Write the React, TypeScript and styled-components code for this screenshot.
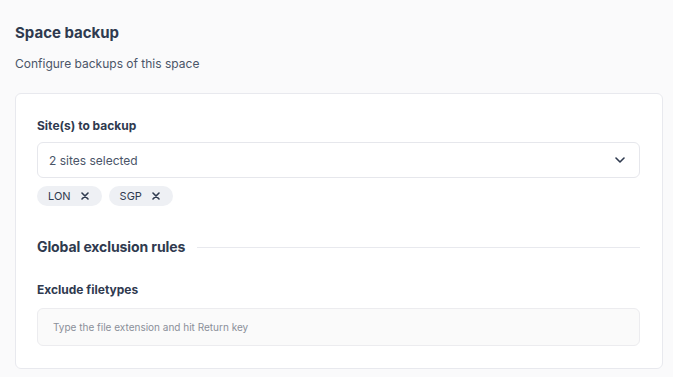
import { createGlobalStyle, styled } from "styled-components";

const GlobalStyle = createGlobalStyle`
  html, body {
    margin: 0;
    padding: 0;
    background: #fafafb;
    font-family: Inter, "Noto Sans", sans-serif;
    color: #2f3a4f;
  }
  * { box-sizing: border-box; }
`;

const Page = styled.div`
  padding: 22px 10px 0 15px;
`;

const Title = styled.h1`
  margin: 0;
  font-size: 15px;
  font-weight: 700;
  line-height: 22px;
  color: #2f3a4f;
`;

const Subtitle = styled.p`
  margin: 12px 0 0;
  font-size: 12px;
  line-height: 16px;
  color: #4a5568;
`;

const Card = styled.section`
  margin-top: 21px;
  background: #fff;
  border: 1px solid #e8e9ee;
  border-radius: 6px;
  padding: 24px 22px 22px 21px;
`;

const Label = styled.div<{ $mt?: number }>`
  font-size: 12px;
  font-weight: 700;
  line-height: 16px;
  color: #2f3a4f;
  margin-top: ${(p) => p.$mt ?? 0}px;
`;

const Select = styled.div`
  margin-top: 8px;
  height: 36px;
  border: 1px solid #e6e7ec;
  border-radius: 6px;
  display: flex;
  align-items: center;
  justify-content: space-between;
  padding: 0 14px 0 11px;
  font-size: 12px;
  color: #4a5568;
`;

const Chips = styled.div`
  display: flex;
  gap: 7px;
  margin-top: 8px;
`;

const Chip = styled.span`
  display: inline-flex;
  align-items: center;
  gap: 10px;
  height: 20px;
  padding: 0 13px 0 11px;
  border-radius: 10px;
  background: #eef0f4;
  font-size: 11px;
  color: #2f3a4f;
`;

const SectionHead = styled.div`
  display: flex;
  align-items: center;
  gap: 12px;
  margin-top: 32px;
`;

const SectionTitle = styled.h2`
  margin: 0;
  font-size: 14px;
  font-weight: 700;
  line-height: 18px;
  letter-spacing: -0.1px;
  color: #2f3a4f;
  white-space: nowrap;
`;

const Rule = styled.div`
  flex: 1;
  height: 1px;
  background: #e8e9ee;
`;

const Input = styled.input`
  display: block;
  width: 100%;
  margin-top: 10px;
  height: 38px;
  border: 1px solid #ececef;
  border-radius: 6px;
  background: #fafafa;
  padding: 0 15px;
  font-family: inherit;
  font-size: 10px;
  color: #2f3a4f;
  outline: none;

  &::placeholder {
    color: #8a8f99;
  }
`;

const Chevron = () => (
  <svg width="10" height="6" viewBox="0 0 10 6" fill="none">
    <path d="M1 1l4 4 4-4" stroke="#2f3a4f" strokeWidth="1.6" strokeLinecap="round" strokeLinejoin="round" />
  </svg>
);

const Cross = () => (
  <svg width="8" height="8" viewBox="0 0 8 8" fill="none">
    <path d="M1 1l6 6M7 1L1 7" stroke="#2f3a4f" strokeWidth="1.6" strokeLinecap="round" />
  </svg>
);

const sites = ["LON", "SGP"];

export default function App() {
  return (
    <>
      <GlobalStyle />
      <Page>
        <Title>Space backup</Title>
        <Subtitle>Configure backups of this space</Subtitle>
        <Card>
          <Label>Site(s) to backup</Label>
          <Select>
            <span>2 sites selected</span>
            <Chevron />
          </Select>
          <Chips>
            {sites.map((s) => (
              <Chip key={s}>
                {s}
                <Cross />
              </Chip>
            ))}
          </Chips>
          <SectionHead>
            <SectionTitle>Global exclusion rules</SectionTitle>
            <Rule />
          </SectionHead>
          <Label $mt={26}>Exclude filetypes</Label>
          <Input placeholder="Type the file extension and hit Return key" />
        </Card>
      </Page>
    </>
  );
}
